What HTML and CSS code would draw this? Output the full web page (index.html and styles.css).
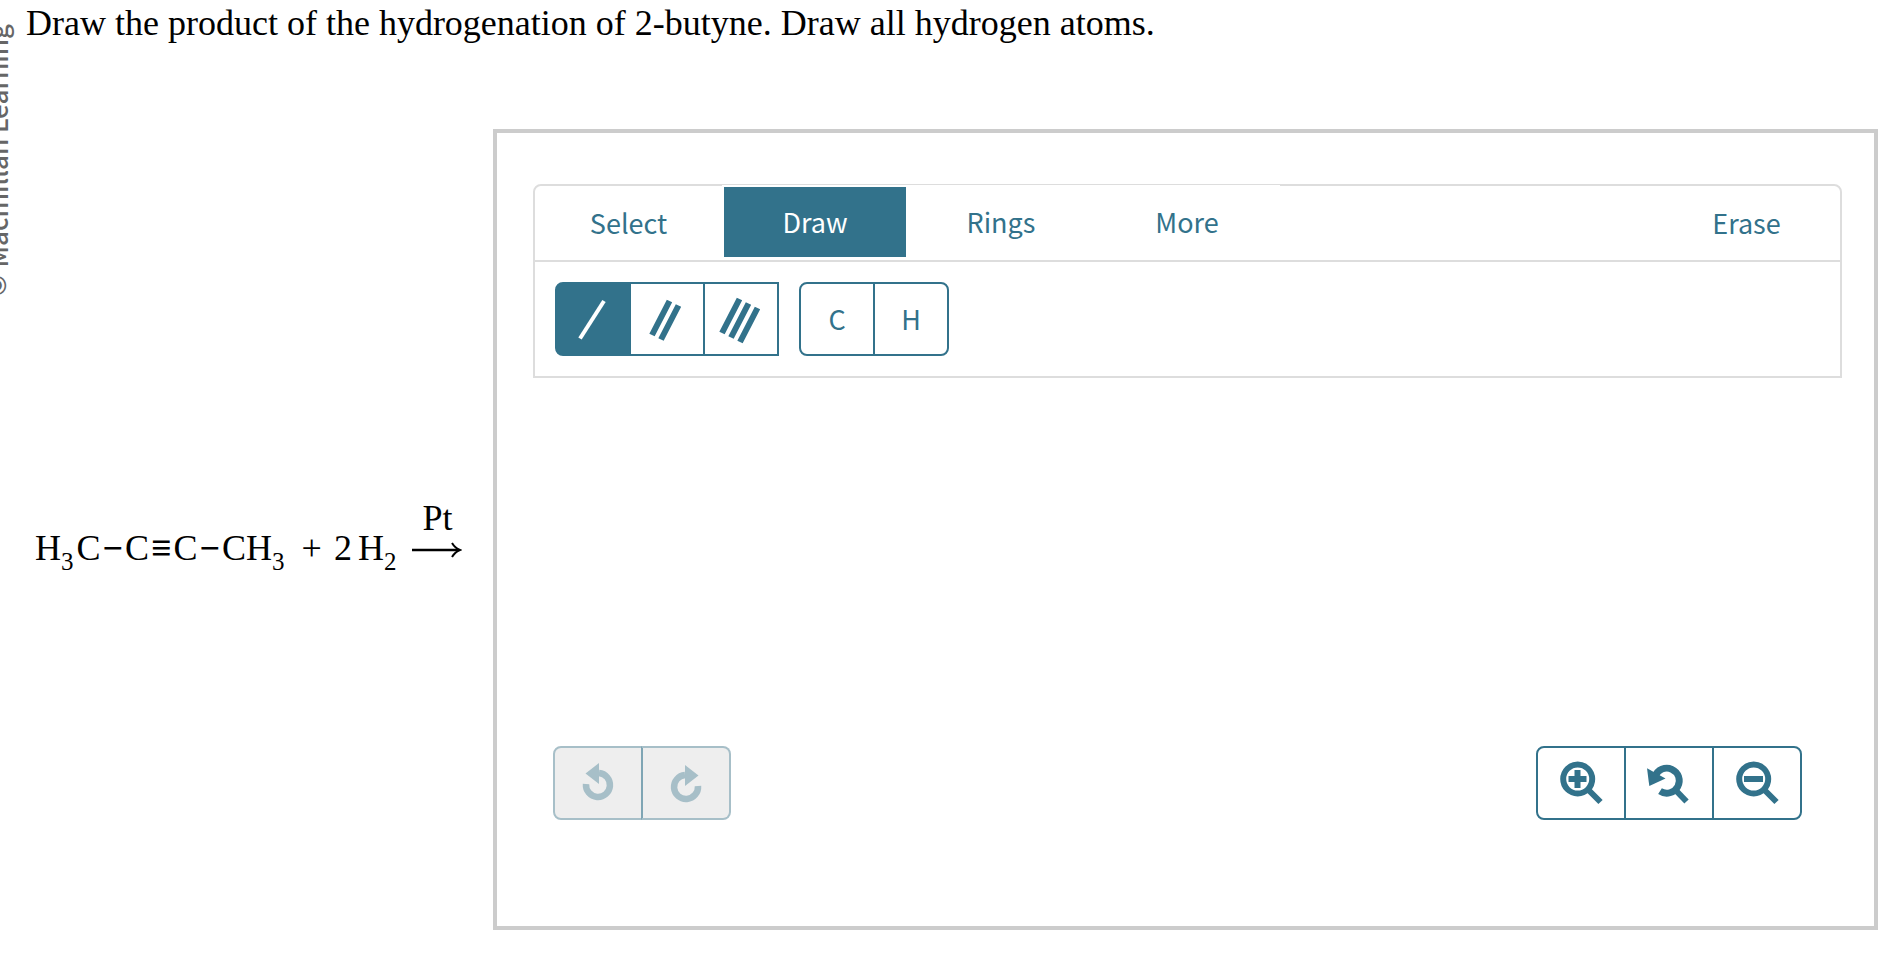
FILE: index.html
```html
<!DOCTYPE html>
<html lang="en">
<head>
    <meta charset="UTF-8">
    <title>Hydrogenation of 2-butyne</title>
    <link rel="stylesheet" href="styles.css">
</head>
<body>

    <div class="watermark">© Macmillan Learning</div>

    <main class="page">
        <p class="question">Draw the product of the hydrogenation of 2-butyne. Draw all hydrogen atoms.</p>

        <div class="problem">
            <div class="equation">
                <span class="formula">H<sub>3</sub>C<span class="bond">−</span>C<span class="bond">≡</span>C<span class="bond">−</span>CH<sub>3</sub></span>
                <span class="plus">+</span>
                <span class="coef">2</span>
                <span>H<sub>2</sub></span>
                <span class="arrow">
                    <span>Pt</span>
                    <svg width="50" height="18" viewBox="0 0 50 18" fill="none" stroke="#000"><path d="M0 9H47" stroke-width="2.6"/><path d="M40 2Q43 7 48 9Q43 11 40 16" stroke-width="2"/></svg>
                </span>
            </div>

            <section class="editor">
                <div class="toolbar">
                    <div class="tabs">
                        <button type="button" class="tab first">Select</button>
                        <button type="button" class="tab active">Draw</button>
                        <button type="button" class="tab">Rings</button>
                        <button type="button" class="tab">More</button>
                        <button type="button" class="tab erase">Erase</button>
                    </div>
                    <div class="tools">
                        <div class="group bonds">
                            <button type="button" class="btn active" aria-label="Single bond"><svg viewBox="0 0 76 74"><path d="M25 56.5L49 19" stroke-width="4"/></svg></button>
                            <button type="button" class="btn" aria-label="Double bond"><svg viewBox="0 0 76 74"><path d="M23 53L40.5 19M32 57.5L49.5 23.5" stroke-width="6"/></svg></button>
                            <button type="button" class="btn" aria-label="Triple bond"><svg viewBox="0 0 76 74"><path d="M19 51L36.5 17M28 55.5L45.5 21.5M37 60L54.5 26" stroke-width="6"/></svg></button>
                        </div>
                        <div class="group">
                            <button type="button" class="btn">C</button>
                            <button type="button" class="btn">H</button>
                        </div>
                    </div>
                </div>

                <div class="controls">
                    <div class="group history">
                        <button type="button" class="btn wide" aria-label="Undo" disabled><svg viewBox="0 0 90 74"><path d="M33 38A12 12 0 1 0 46 27" stroke-width="6.5"/><path class="solid" d="M32.5 27.5L46 17V38Z"/></svg></button>
                        <button type="button" class="btn wide" aria-label="Redo" disabled><svg viewBox="0 0 90 74"><path d="M57 40A12 12 0 1 1 44 29" stroke-width="6.5"/><path class="solid" d="M57.5 29.5L44 19V40Z"/></svg></button>
                    </div>
                    <div class="group">
                        <button type="button" class="btn wide" aria-label="Zoom in"><svg viewBox="0 0 90 74"><circle cx="41.7" cy="33" r="14.5" stroke-width="6"/><path d="M32.5 33H50.5M41.5 24V42" stroke-width="6"/><path d="M52 43.5L64.5 56" stroke-width="6"/></svg></button>
                        <button type="button" class="btn wide" aria-label="Reset zoom"><svg viewBox="0 0 90 74"><path d="M31 30.5A12.5 12.5 0 1 1 36 45.2" stroke-width="6.8"/><path class="solid" d="M23 22.3L41.5 32.5L25.3 40Z"/><path d="M50.5 43L62.5 55.5" stroke-width="6"/></svg></button>
                        <button type="button" class="btn wide" aria-label="Zoom out"><svg viewBox="0 0 90 74"><circle cx="41.7" cy="33" r="14.5" stroke-width="6"/><path d="M32 33H51" stroke-width="6"/><path d="M52 43.5L64.5 56" stroke-width="6"/></svg></button>
                    </div>
                </div>
            </section>
        </div>
    </main>

</body>
</html>
```

FILE: styles.css
```css
* { box-sizing: border-box; }
body { margin: 0; background: #fff; color: #000; font-family: "Liberation Serif", "Times New Roman", serif; font-size: 36px; }
button { font-family: "Noto Sans CJK SC", "Open Sans", sans-serif; font-size: 27px; line-height: 40px; color: #32728b; background: #fff; padding: 0; cursor: pointer; }

/* copyright text running up the left edge */
.watermark { position: absolute; left: -23px; top: 24px; writing-mode: vertical-rl; transform: rotate(180deg); font-family: "Noto Sans CJK SC", sans-serif; font-size: 26px; font-weight: 500; line-height: 40px; color: #666; white-space: nowrap; }

.page { display: flex; flex-direction: column; min-height: 100vh; padding-bottom: 28px; }
.question { margin: 0; padding: 3px 26px 0; line-height: 40px; }
.problem { flex: 1; display: grid; grid-template-columns: 493px 1fr; margin-top: 86px; padding-right: 16px; }

.equation { display: flex; align-items: center; align-self: center; padding: 36px 0 0 35px; line-height: 40px; white-space: nowrap; }
sub { font-size: 25px; line-height: 0; vertical-align: -10px; margin-right: 3px; }
.bond { margin: 0 2px; font-weight: bold; }
.plus { margin: 0 12px 0 14px; }
.coef { margin-right: 6px; }
.arrow { display: flex; flex-direction: column; align-items: center; margin: 0 0 42px 13px; line-height: 46px; }

.editor { display: flex; flex-direction: column; justify-content: space-between; border: 4px solid #ccc; padding: 51px 32px 106px 36px; }
.toolbar { border: 2px solid #ddd; border-radius: 8px 8px 0 0; }
.tabs { display: flex; border-bottom: 2px solid #ddd; }
.tab { width: 186px; height: 74px; margin-top: -1px; margin-bottom: 1px; border: 2px solid #fff; }
.tab.active { background: #32728b; color: #fff; }
.tab.first, .tab.erase { width: 187px; margin: 0; border: none; border-radius: 8px 0 0 0; }
.tab.erase { margin-left: auto; border-radius: 0 8px 8px 0; }
.tools { display: flex; gap: 20px; padding: 20px; }

.group { display: flex; }
.btn { width: 76px; height: 74px; border: 2px solid #32728b; }
.btn + .btn { margin-left: -2px; }
.btn:first-child { border-radius: 8px 0 0 8px; }
.btn:last-child { border-radius: 0 8px 8px 0; }
.bonds .btn:last-child { border-radius: 0; }
.btn.wide { width: 90px; }
.btn.active { background: #32728b; color: #fff; }
.btn svg { display: block; width: calc(100% + 4px); height: 74px; margin: -2px; fill: none; stroke: currentColor; }
.btn svg .solid { fill: currentColor; stroke: none; }
.btn:disabled { background: #eee; color: #a7bfc8; border-color: #a7bfc8; cursor: default; }
.history .btn + .btn { border-left-color: #7fa5b4; }

.controls { display: flex; justify-content: space-between; padding: 0 40px 0 20px; }
```
